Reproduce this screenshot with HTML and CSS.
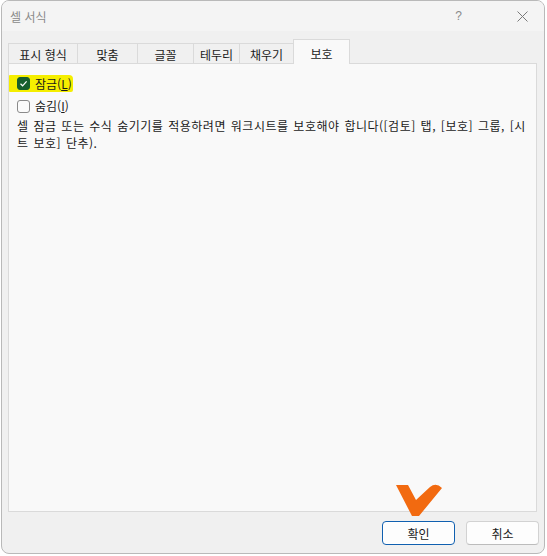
FILE: index.html
```html
<!DOCTYPE html>
<html lang="ko">
<head>
<meta charset="utf-8">
<title>셀 서식</title>
<link rel="stylesheet" href="styles.css">
</head>
<body>
<div class="window">
  <div class="titlebar">
    <span class="title">셀 서식</span>
    <span class="help">?</span>
    <svg class="close" width="11" height="11" viewBox="0 0 11 11"><path d="M0.5 0.5 L10.5 10.5 M10.5 0.5 L0.5 10.5" stroke="#7a7a7a" stroke-width="1" fill="none"/></svg>
  </div>
  <div class="tabs">
    <div class="tab">표시 형식</div>
    <div class="tab">맞춤</div>
    <div class="tab">글꼴</div>
    <div class="tab">테두리</div>
    <div class="tab">채우기</div>
    <div class="tab active">보호</div>
  </div>
  <div class="panel">
    <div class="row highlight">
      <span class="cb checked"><svg width="9" height="9" viewBox="0 0 9 9"><path d="M1.5 4.8 L3.6 6.8 L7.6 2.3" stroke="#ffffff" stroke-width="1.2" fill="none"/></svg></span>
      <span class="label">잠금(<u>L</u>)</span>
    </div>
    <div class="row">
      <span class="cb"></span>
      <span class="label">숨김(<u>I</u>)</span>
    </div>
    <p class="note">셀 잠금 또는 수식 숨기기를 적용하려면 워크시트를 보호해야 합니다([검토] 탭, [보호] 그룹, [시<br>트 보호] 단추).</p>
  </div>
  <div class="footer">
    <button class="btn primary">확인</button>
    <button class="btn">취소</button>
  </div>
  <svg class="marker" width="50" height="36" viewBox="393 482 50 36"><path d="M395 484 L407 484 L415 499 L429 486 Q435 481 441 487 L418 515 L411 515 Z" fill="#f26a10"/></svg>
</div>
</body>
</html>
```

FILE: styles.css
```css
* { box-sizing: border-box; }
html, body { margin: 0; padding: 0; background: #ffffff; }
body {
  font-family: "Noto Sans CJK KR", "Noto Sans", "Liberation Sans", sans-serif;
  font-size: 12px;
  color: #1a1a1a;
}
.window {
  position: relative;
  margin-left: 1px;
  width: 544px;
  height: 554px;
  border: 1px solid #b9b9b9;
  border-radius: 8px;
  background: #f0f0f0;
  overflow: hidden;
}
.titlebar {
  height: 30px;
  display: flex;
  align-items: center;
  padding-left: 8px;
  background: #f4f4f4;
}
.title {
  color: #8a8a8a;
  font-size: 12px;
}
.help {
  margin-left: auto;
  color: #8a8a8a;
  font-size: 12px;
  font-family: "Liberation Sans", sans-serif;
}
.close {
  margin-left: 55px;
  margin-right: 16px;
}
.tabs {
  display: flex;
  align-items: flex-end;
  height: 24px;
  margin: 8px 0 0 6px;
}
.tab {
  height: 20px;
  border-top: 1px solid #dadada;
  border-left: 1px solid #dadada;
  display: flex;
  align-items: center;
  justify-content: center;
  padding-top: 1px;
  color: #1a1a1a;
}
.tab:nth-child(1) { width: 69px; }
.tab:nth-child(2) { width: 60px; }
.tab:nth-child(3) { width: 56px; }
.tab:nth-child(4) { width: 46px; }
.tab:nth-child(5) { width: 54px; }
.tab.active {
  width: 57px;
  height: 25px;
  margin-bottom: -1px;
  border-right: 1px solid #dadada;
  background: #f9f9f9;
  position: relative;
  z-index: 1;
  padding-top: 3px;
}
.panel {
  margin: 0 7px 0 6px;
  height: 449px;
  border: 1px solid #dadada;
  background: #f9f9f9;
  padding: 11px 8px 0 8px;
}
.row {
  display: flex;
  align-items: center;
  height: 16px;
  gap: 5px;
}
.row + .row { margin-top: 6px; }
.row.highlight {
  width: max-content;
  margin-left: -8px;
  padding: 0 0 0 8px;
  height: 17px;
  background: #f5ee00;
  border-radius: 1px 4px 2px 1px;
}
.cb {
  width: 13px;
  height: 13px;
  border: 1px solid #8a8a8a;
  border-radius: 3px;
  background: #fbfbfb;
  display: flex;
  align-items: center;
  justify-content: center;
  flex: none;
}
.cb.checked {
  background: #175f2d;
  border-color: #175f2d;
}
.label { line-height: 16px; padding-right: 1px; }
.label u { text-underline-offset: 1px; }
.note {
  margin: 3px 0 0 0;
  line-height: 17px;
  font-size: 12px;
  letter-spacing: 0.5px;
  word-spacing: 1px;
  color: #1a1a1a;
}
.footer {
  display: flex;
  justify-content: flex-end;
  gap: 11px;
  padding: 9px 5px 0 0;
}
.btn {
  width: 73px;
  height: 24px;
  font-family: "Noto Sans CJK KR", "Noto Sans", sans-serif;
  font-size: 12px;
  color: #1a1a1a;
  background: #fdfdfd;
  border: 1px solid #d2d2d2;
  border-bottom-color: #bcbcbc;
  border-radius: 4px;
  padding: 0;
}
.btn.primary {
  border: 1px solid #1060b0;
  box-shadow: inset 0 0 0 1px #ffffff;
}
.marker {
  position: absolute;
  left: 392px;
  top: 482px;
}
```
